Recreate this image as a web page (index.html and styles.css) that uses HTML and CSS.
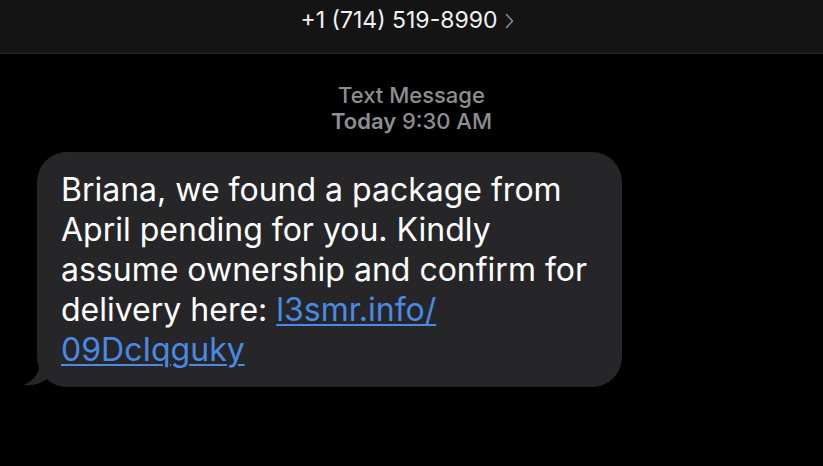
FILE: index.html
```html
<!DOCTYPE html>
<html lang="en">
<head>
    <meta charset="UTF-8">
    <meta name="viewport" content="width=device-width, initial-scale=1.0">
    <title>Messages</title>
    <link rel="stylesheet" href="styles.css">
</head>
<body>
    <header class="top-bar">
        <span class="contact">+1 (714) 519-8990</span>
        <svg class="chevron" width="9" height="16" viewBox="0 0 9 16">
            <path d="M1.5 1.5 L7.5 8 L1.5 14.5" fill="none" stroke="#8a8a8e" stroke-width="1.6" stroke-linecap="round" stroke-linejoin="round"/>
        </svg>
    </header>

    <main class="thread">
        <div class="stamp">
            <div class="stamp-kind">Text Message</div>
            <div><b>Today</b> 9:30 AM</div>
        </div>

        <div class="bubble">
            <p>Briana, we found a package from<br>April pending for you. Kindly<br>assume ownership and confirm for<br>delivery here: <a href="#">l3smr.info/<br>09DcIqguky</a></p>
            <svg class="tail" width="30" height="26" viewBox="0 0 30 26">
                <path d="M16 0 C16 10 12 18 0 24 C10 25 18 22 24 17 L30 0 Z" fill="#262628"/>
            </svg>
        </div>
    </main>
</body>
</html>
```

FILE: styles.css
```css
body {
    margin: 0;
    background-color: #000;
    font-family: Inter, "Liberation Sans", sans-serif;
    color: #fff;
    height: 466px;
    overflow: hidden;
}

.top-bar {
    height: 54px;
    background-color: #141414;
    border-bottom: 1px solid #262626;
    display: flex;
    justify-content: center;
    align-items: center;
    gap: 8px;
    padding-right: 8px;
    box-sizing: border-box;
}

.contact {
    font-size: 23px;
    color: #f2f2f2;
    margin-top: -13px;
}

.chevron {
    margin-top: -11px;
}

.thread {
    padding: 28px 0 0 37px;
}

.stamp {
    width: 749px;
    text-align: center;
    color: #8e8e93;
    font-size: 22px;
    font-weight: 500;
    line-height: 26px;
}

.stamp b {
    font-weight: 600;
}

.bubble {
    position: relative;
    margin-top: 18px;
    width: 585px;
    height: 235px;
    box-sizing: border-box;
    background-color: #262628;
    border-radius: 30px;
    padding: 18px 0 0 24px;
}

.bubble p {
    margin: 0;
    font-size: 32px;
    line-height: 40px;
}

.bubble a {
    color: #4a8ae4;
    text-decoration: underline;
    text-underline-offset: 3px;
    text-decoration-thickness: 1.5px;
}

.tail {
    position: absolute;
    left: -13px;
    bottom: 0;
}
```
